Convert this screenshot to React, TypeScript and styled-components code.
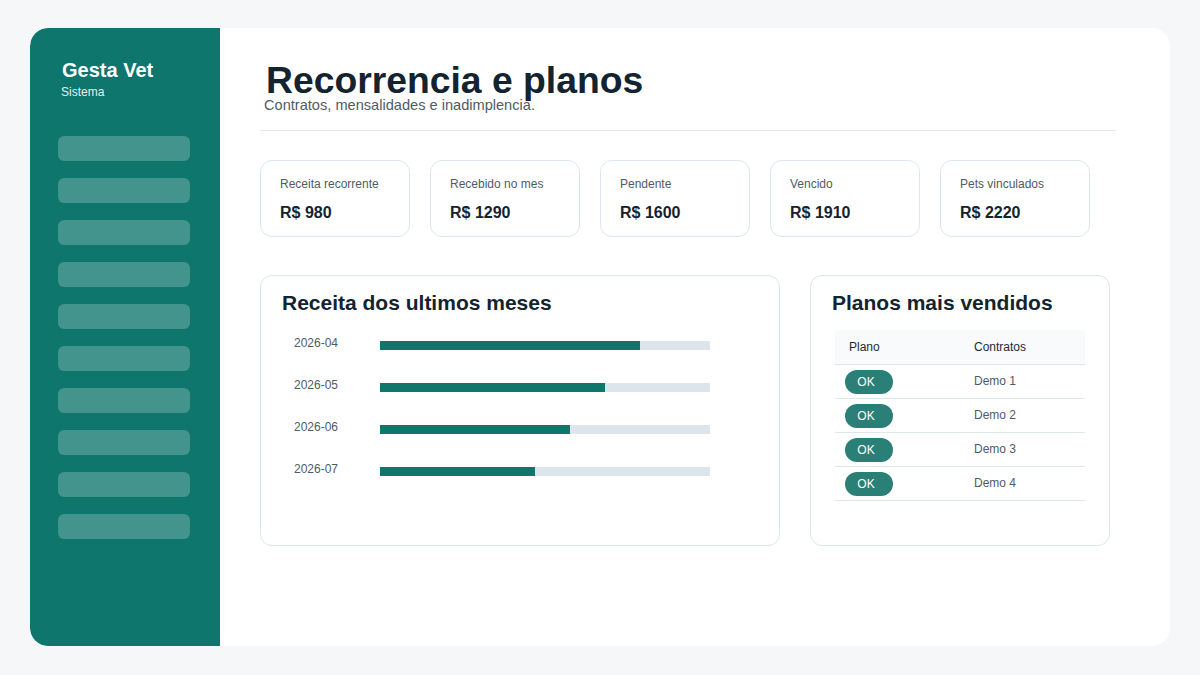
import React from "react";
import styled, { createGlobalStyle } from "styled-components";

const Global = createGlobalStyle`
  html, body { margin: 0; padding: 0; background: #f5f7f9; }
  body { font-family: "Liberation Sans", Arial, sans-serif; }
  * { box-sizing: border-box; }
`;

const Page = styled.div`
  width: 1200px;
  height: 675px;
  padding: 28px 30px 29px 30px;
`;

const Shell = styled.div`
  display: flex;
  height: 618px;
  background: #ffffff;
  border-radius: 18px;
  overflow: hidden;
`;

const Sidebar = styled.aside`
  width: 190px;
  flex-shrink: 0;
  background: #0f766d;
  border-radius: 18px 0 0 18px;
  padding: 30px 0 0 28px;
  display: flex;
  flex-direction: column;
`;

const Brand = styled.div`
  padding-left: 4px;
  color: #fff;
  font-size: 20px;
  font-weight: 700;
  line-height: 24px;
`;

const BrandSub = styled.div`
  color: rgba(255, 255, 255, 0.9);
  font-size: 12px;
  line-height: 14px;
  margin-top: 3px;
  padding-left: 3px;
`;

const Nav = styled.nav`
  margin-top: 37px;
  display: flex;
  flex-direction: column;
  gap: 17px;
`;

const NavItem = styled.div`
  width: 132px;
  height: 25px;
  border-radius: 6px;
  background: rgba(255, 255, 255, 0.22);
`;

const Main = styled.main`
  flex: 1;
  padding: 30px 54px 0 40px;
`;

const Header = styled.header`
  padding-bottom: 17px;
  border-bottom: 1px solid #e2e8ee;
`;

const Title = styled.h1`
  margin: 0;
  padding-left: 6px;
  font-size: 37.3px;
  line-height: 44px;
  font-weight: 700;
  color: #13232f;
`;

const Subtitle = styled.p`
  margin: -5px 0 0 4px;
  font-size: 14.6px;
  line-height: 16px;
  color: #4f5b66;
`;

const Stats = styled.div`
  display: flex;
  gap: 20px;
  margin-top: 29px;
`;

const StatCard = styled.div`
  width: 150px;
  height: 77px;
  border: 1px solid #dde6ec;
  border-radius: 12px;
  padding: 16px 19px 0 19px;
`;

const StatLabel = styled.div`
  font-size: 12px;
  line-height: 14px;
  color: #4f5b66;
`;

const StatValue = styled.div`
  margin-top: 13px;
  font-size: 16px;
  line-height: 18px;
  font-weight: 700;
  color: #13232f;
`;

const Panels = styled.div`
  display: flex;
  gap: 30px;
  margin-top: 38px;
`;

const Panel = styled.section<{ $w: number }>`
  width: ${(p) => p.$w}px;
  height: 271px;
  border: 1px solid #dde6ec;
  border-radius: 12px;
  padding: 15px 21px 0 21px;
`;

const PanelTitle = styled.h2`
  margin: 0;
  font-size: 21px;
  line-height: 24px;
  font-weight: 700;
  color: #13232f;
`;

const Bars = styled.div`
  margin-top: 21px;
  padding-left: 12px;
  display: flex;
  flex-direction: column;
  gap: 28px;
`;

const BarRow = styled.div`
  display: flex;
  align-items: center;
  height: 14px;
`;

const BarLabel = styled.div`
  width: 86px;
  font-size: 12px;
  line-height: 14px;
  color: #4f5b66;
`;

const Track = styled.div`
  width: 330px;
  height: 9px;
  background: #dce5eb;
  position: relative;
  top: 2px;
`;

const Fill = styled.div`
  height: 100%;
  background: #10766c;
`;

const Table = styled.table`
  margin-top: 15px;
  margin-left: 3px;
  width: 250px;
  border-collapse: collapse;
  font-size: 12px;
`;

const Th = styled.th<{ $pl: number }>`
  text-align: left;
  font-weight: 400;
  color: #1f2933;
  background: #f8fafc;
  height: 34px;
  padding: 0 0 0 ${(p) => p.$pl}px;
  border-bottom: 1px solid #dfe6ea;
`;

const Td = styled.td<{ $pl: number }>`
  height: 34px;
  padding: 0 0 0 ${(p) => p.$pl}px;
  border-bottom: 1px solid #dfe6ea;
  color: #4f5b66;
  vertical-align: middle;
`;

const Badge = styled.span`
  display: inline-flex;
  align-items: center;
  justify-content: center;
  width: 48px;
  height: 24px;
  border-radius: 12px;
  background: #2a8077;
  color: #fff;
  font-size: 12px;
  padding-right: 6px;
  position: relative;
  top: 1px;
`;

const stats = [
  ["Receita recorrente", "R$ 980"],
  ["Recebido no mes", "R$ 1290"],
  ["Pendente", "R$ 1600"],
  ["Vencido", "R$ 1910"],
  ["Pets vinculados", "R$ 2220"],
];

const months = [
  ["2026-04", 260],
  ["2026-05", 225],
  ["2026-06", 190],
  ["2026-07", 155],
] as const;

export default function App() {
  return (
    <>
      <Global />
      <Page>
        <Shell>
          <Sidebar>
            <Brand>Gesta Vet</Brand>
            <BrandSub>Sistema</BrandSub>
            <Nav>
              {Array.from({ length: 10 }).map((_, i) => (
                <NavItem key={i} />
              ))}
            </Nav>
          </Sidebar>
          <Main>
            <Header>
              <Title>Recorrencia e planos</Title>
              <Subtitle>Contratos, mensalidades e inadimplencia.</Subtitle>
            </Header>
            <Stats>
              {stats.map(([l, v]) => (
                <StatCard key={l}>
                  <StatLabel>{l}</StatLabel>
                  <StatValue>{v}</StatValue>
                </StatCard>
              ))}
            </Stats>
            <Panels>
              <Panel $w={520}>
                <PanelTitle>Receita dos ultimos meses</PanelTitle>
                <Bars>
                  {months.map(([m, w]) => (
                    <BarRow key={m}>
                      <BarLabel>{m}</BarLabel>
                      <Track>
                        <Fill style={{ width: `${(w / 330) * 100}%` }} />
                      </Track>
                    </BarRow>
                  ))}
                </Bars>
              </Panel>
              <Panel $w={300}>
                <PanelTitle>Planos mais vendidos</PanelTitle>
                <Table>
                  <thead>
                    <tr>
                      <Th $pl={14} style={{ width: 139 }}>Plano</Th>
                      <Th $pl={0}>Contratos</Th>
                    </tr>
                  </thead>
                  <tbody>
                    {[1, 2, 3, 4].map((n) => (
                      <tr key={n}>
                        <Td $pl={10}>
                          <Badge>OK</Badge>
                        </Td>
                        <Td $pl={0}>Demo {n}</Td>
                      </tr>
                    ))}
                  </tbody>
                </Table>
              </Panel>
            </Panels>
          </Main>
        </Shell>
      </Page>
    </>
  );
}
